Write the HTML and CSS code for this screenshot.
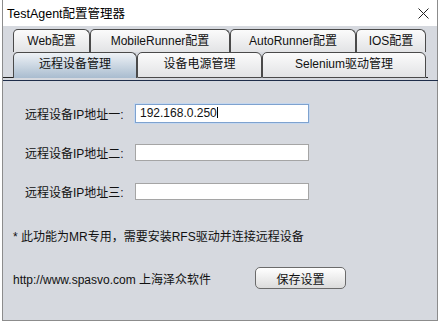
FILE: index.html
```html
<!DOCTYPE html>
<html lang="zh-CN">
<head>
  <meta charset="UTF-8">
  <title>TestAgent配置管理器</title>
  <link rel="stylesheet" href="styles.css">
</head>
<body>

<div class="window">
  <div class="titlebar">
    <span class="title">TestAgent配置管理器</span>
    <svg class="close" width="11" height="11" viewBox="0 0 11 11">
      <path d="M0.5 0.5 L10.5 10.5 M10.5 0.5 L0.5 10.5" stroke="#222" stroke-width="1" fill="none"/>
    </svg>
  </div>

  <div class="body">
    <div class="tabs">
      <div class="tab-row back">
        <div class="tab tab-web">Web配置</div>
        <div class="tab tab-mobile">MobileRunner配置</div>
        <div class="tab tab-auto">AutoRunner配置</div>
        <div class="tab tab-ios">IOS配置</div>
      </div>
      <div class="tab-row front">
        <div class="lead"></div>
        <div class="tab tab-remote selected">远程设备管理</div>
        <div class="tab tab-power">设备电源管理</div>
        <div class="tab tab-selenium">Selenium驱动管理</div>
        <div class="trail"></div>
      </div>
    </div>

    <div class="panel">
      <div class="form">
        <div class="row">
          <label>远程设备IP地址一:</label>
          <div class="field focused">192.168.0.250<span class="caret"></span></div>
        </div>
        <div class="row">
          <label>远程设备IP地址二:</label>
          <div class="field"></div>
        </div>
        <div class="row">
          <label>远程设备IP地址三:</label>
          <div class="field"></div>
        </div>
      </div>

      <div class="note">* 此功能为MR专用，需要安装RFS驱动并连接远程设备</div>

      <div class="footer">
        <span class="link">http://www.spasvo.com 上海泽众软件</span>
        <button class="save">保存设置</button>
      </div>
    </div>
  </div>
</div>

</body>
</html>
```

FILE: styles.css
```css
body {
  margin: 0;
  background: #ffffff;
  font-family: "Liberation Sans", "Noto Sans CJK SC", sans-serif;
  font-size: 12px;
  color: #111;
}

.window {
  margin-left: 2px;
  width: 434px;
  height: 320px;
  border: 1px solid #8c8c8c;
  border-top: none;
  display: flex;
  flex-direction: column;
}

.titlebar {
  height: 26px;
  background: #ffffff;
  display: flex;
  align-items: center;
  justify-content: space-between;
  padding: 0 8px 0 4px;
}

.title {
  font-size: 12.5px;
  color: #000;
  margin-top: -1px;
}

.close {
  margin-top: 1px;
}

.body {
  flex: 1;
  background: #d6d9df;
  padding-top: 3px;
}

.tabs {
  width: 425px;
}

.tab-row {
  display: flex;
}

.tab-row.back {
  padding-left: 10px;
  height: 23px;
}

.tab-row.front {
  height: 26px;
}

.tab {
  box-sizing: border-box;
  border: 1px solid #4a4a4a;
  border-radius: 5px 6px 0 0;
  background: linear-gradient(#fbfbfb, #e2e3e5);
  text-align: center;
  line-height: 22px;
  font-size: 12px;
}

.tab-web { width: 77px; }
.tab-mobile { width: 140px; }
.tab-auto { width: 126px; }
.tab-ios { width: 70px; }
.tab-remote { width: 124px; }
.tab-power { width: 125px; }
.tab-selenium { width: 164px; }

.back .tab {
  border-bottom: none;
  height: 23px;
}

.front .tab {
  height: 26px;
  line-height: 23px;
}

.front .tab.selected {
  border-bottom: none;
  background: linear-gradient(#eef2f6, #a9bccf);
}

.lead {
  width: 10px;
  border-bottom: 1px solid #222;
}

.trail {
  flex: 1;
  border-bottom: 1px solid #222;
}

.panel {
  width: 425px;
  margin-top: 2px;
  border-top: 1px solid #1e2d4a;
  padding: 23px 0 0 10px;
}

.form {
  padding-left: 12px;
  display: flex;
  flex-direction: column;
  gap: 21px;
}

.row {
  display: flex;
  align-items: center;
  height: 18px;
}

.row label {
  width: 110px;
}

.field {
  box-sizing: border-box;
  width: 174px;
  height: 17px;
  border: 1px solid #a5a5a5;
  background: #ffffff;
  padding-left: 4px;
  line-height: 15px;
  font-size: 12px;
}

.field.focused {
  height: 19px;
  border: 1px solid #7ea2cf;
  box-shadow: 0 0 0 1px #c5d7ee;
  line-height: 17px;
}

.caret {
  display: inline-block;
  width: 1px;
  height: 11px;
  background: #000;
  vertical-align: -1px;
}

.note {
  margin-top: 29px;
  line-height: 16px;
}

.footer {
  margin-top: 22px;
  display: grid;
  grid-template-columns: 242px 91px;
  align-items: center;
}

.save {
  width: 91px;
  height: 22px;
  border: 1px solid #6b6b6b;
  border-radius: 5px;
  background: linear-gradient(#ffffff, #dcdcdc);
  font-family: "Liberation Sans", "Noto Sans CJK SC", sans-serif;
  font-size: 12px;
  color: #111;
  padding: 0;
}
```
